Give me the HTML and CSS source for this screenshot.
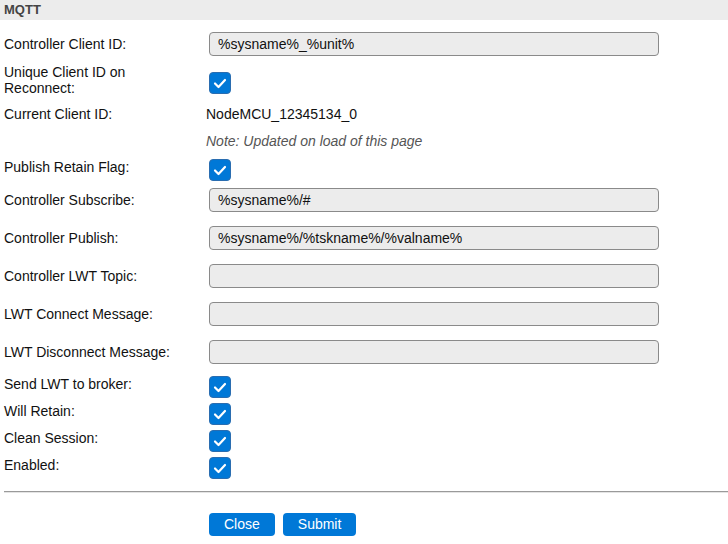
FILE: index.html
```html
<!DOCTYPE html>
<html>
<head>
<meta charset="utf-8">
<link rel="stylesheet" href="styles.css">
</head>
<body>
<div class="section-head">MQTT</div>
<div class="form">
  <div class="row row-in first">
    <div class="label">Controller Client ID:</div>
    <div class="field"><input class="text" type="text" value="%sysname%_%unit%"></div>
  </div>
  <div class="row row-chk tall">
    <div class="label">Unique Client ID on Reconnect:</div>
    <div class="field"><span class="check"><svg viewBox="0 0 22 22" width="22" height="22"><polyline points="6,11.5 9.5,15 16,8" fill="none" stroke="#fff" stroke-width="2.2" stroke-linecap="round" stroke-linejoin="round"/></svg></span></div>
  </div>
  <div class="row row-txt">
    <div class="label">Current Client ID:</div>
    <div class="value">NodeMCU_12345134_0</div>
  </div>
  <div class="row row-txt">
    <div class="label"></div>
    <div class="value note">Note: Updated on load of this page</div>
  </div>
  <div class="row row-chk">
    <div class="label">Publish Retain Flag:</div>
    <div class="field"><span class="check"><svg viewBox="0 0 22 22" width="22" height="22"><polyline points="6,11.5 9.5,15 16,8" fill="none" stroke="#fff" stroke-width="2.2" stroke-linecap="round" stroke-linejoin="round"/></svg></span></div>
  </div>
  <div class="row row-in">
    <div class="label">Controller Subscribe:</div>
    <div class="field"><input class="text" type="text" value="%sysname%/#"></div>
  </div>
  <div class="row row-in">
    <div class="label">Controller Publish:</div>
    <div class="field"><input class="text" type="text" value="%sysname%/%tskname%/%valname%"></div>
  </div>
  <div class="row row-in">
    <div class="label">Controller LWT Topic:</div>
    <div class="field"><input class="text" type="text" value=""></div>
  </div>
  <div class="row row-in">
    <div class="label">LWT Connect Message:</div>
    <div class="field"><input class="text" type="text" value=""></div>
  </div>
  <div class="row row-in">
    <div class="label">LWT Disconnect Message:</div>
    <div class="field"><input class="text" type="text" value=""></div>
  </div>
  <div class="row row-chk">
    <div class="label">Send LWT to broker:</div>
    <div class="field"><span class="check"><svg viewBox="0 0 22 22" width="22" height="22"><polyline points="6,11.5 9.5,15 16,8" fill="none" stroke="#fff" stroke-width="2.2" stroke-linecap="round" stroke-linejoin="round"/></svg></span></div>
  </div>
  <div class="row row-chk">
    <div class="label">Will Retain:</div>
    <div class="field"><span class="check"><svg viewBox="0 0 22 22" width="22" height="22"><polyline points="6,11.5 9.5,15 16,8" fill="none" stroke="#fff" stroke-width="2.2" stroke-linecap="round" stroke-linejoin="round"/></svg></span></div>
  </div>
  <div class="row row-chk">
    <div class="label">Clean Session:</div>
    <div class="field"><span class="check"><svg viewBox="0 0 22 22" width="22" height="22"><polyline points="6,11.5 9.5,15 16,8" fill="none" stroke="#fff" stroke-width="2.2" stroke-linecap="round" stroke-linejoin="round"/></svg></span></div>
  </div>
  <div class="row row-chk">
    <div class="label">Enabled:</div>
    <div class="field"><span class="check"><svg viewBox="0 0 22 22" width="22" height="22"><polyline points="6,11.5 9.5,15 16,8" fill="none" stroke="#fff" stroke-width="2.2" stroke-linecap="round" stroke-linejoin="round"/></svg></span></div>
  </div>
</div>
<hr class="sep">
<div class="actions">
  <button class="btn">Close</button>
  <button class="btn">Submit</button>
</div>
</body>
</html>
```

FILE: styles.css
```css
html, body {
  margin: 0;
  padding: 0;
  background: #fff;
}
body {
  font-family: "Liberation Sans", Arial, sans-serif;
  font-size: 14px;
  line-height: 16px;
  color: #111;
}
.section-head {
  height: 20px;
  line-height: 20px;
  background: #ececec;
  color: #444;
  font-weight: bold;
  font-size: 13px;
  padding-left: 4px;
}
.form {
  padding-top: 5px;
}
.row {
  display: grid;
  grid-template-columns: 202px 1fr;
  align-items: center;
  padding-left: 4px;
}
.label {
  max-width: 185px;
}
.row-in {
  height: 38px;
}
.row-txt {
  height: 27px;
}
.row-chk {
  height: 27px;
}
.row-chk.tall {
  height: auto;
  padding-top: 2px;
  padding-bottom: 4px;
}
.row-chk .label {
  margin-top: -1px;
}
.field {
  display: flex;
  align-items: center;
}
.text {
  box-sizing: border-box;
  width: 450px;
  height: 24px;
  margin: 0 0 0 3px;
  padding: 0 8px;
  border: 1px solid #8a8a8a;
  border-radius: 4px;
  background: #ececec;
  font-family: "Liberation Sans", Arial, sans-serif;
  font-size: 14px;
  color: #111;
  outline: none;
}
.check {
  box-sizing: border-box;
  display: block;
  width: 22px;
  height: 22px;
  margin: 4px 0 0 3px;
  border-radius: 4px;
  background: #0078d7;
  border: 1px solid #2a6db0;
}
.check svg {
  display: block;
  margin: -1px;
}
.value {
  color: #111;
}
.note {
  font-style: italic;
  color: #555;
}
.sep {
  margin: 12px 0 0 4px;
  border: 0;
  border-top: 1px solid #9a9a9a;
  border-bottom: 1px solid #e4e4e4;
  height: 0;
}
.actions {
  display: flex;
  gap: 8px;
  padding: 20px 0 0 209px;
}
.btn {
  height: 23px;
  padding: 0 15px;
  border: 0;
  border-radius: 4px;
  background: #0078d7;
  color: #fff;
  font-family: "Liberation Sans", Arial, sans-serif;
  font-size: 14px;
  line-height: 23px;
}
```
